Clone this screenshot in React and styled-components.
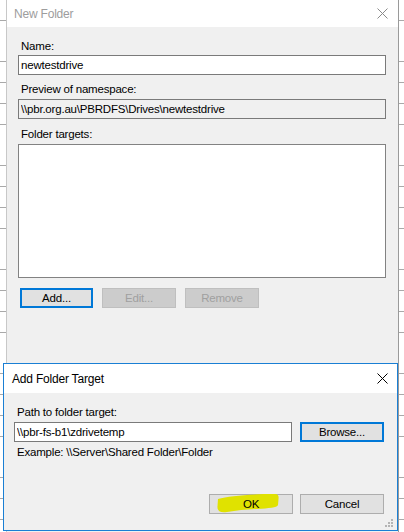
import React from "react";
import styled, { createGlobalStyle } from "styled-components";

const Global = createGlobalStyle`
  html, body { margin: 0; padding: 0; background: #fff; }
  body {
    font-family: "Liberation Sans", Arial, sans-serif;
    font-size: 11.5px;
    letter-spacing: -0.2px;
    color: #000;
  }
  * { box-sizing: border-box; }
`;

const Desktop = styled.div`
  position: relative;
  width: 404px;
  height: 532px;
  overflow: hidden;
  background-color: #fff;
  background-image: repeating-linear-gradient(
    to bottom,
    transparent 0px,
    transparent 20px,
    #a9a9a9 20px,
    #a9a9a9 20.8px
  );
  background-size: 100% 1000px;
  background-position: 0 -0.2px;
`;

const Window = styled.div`
  margin-left: 6px;
  width: 393px;
  height: 600px;
  background: #f0f0f0;
  border-left: 1px solid #c8c8c8;
  border-right: 1px solid #9a9a9a;
  display: flex;
  flex-direction: column;
`;

const TitleBar = styled.div`
  height: ${p => p.h}px;
  background: #fff;
  display: flex;
  align-items: center;
  justify-content: space-between;
  padding: 0 ${p => p.padR}px 0 ${p => p.padL}px;
  flex-shrink: 0;
`;

const Title = styled.span`
  font-size: 12px;
  color: ${p => (p.inactive ? "#9d9d9d" : "#000")};
`;

const Body = styled.div`
  display: flex;
  flex-direction: column;
  padding: ${p => p.pad};
`;

const Label = styled.div`
  height: 15px;
  line-height: 15px;
  padding-left: ${p => p.indent || 3}px;
  margin-top: ${p => p.mt || 0}px;
  margin-bottom: ${p => p.mb || 0}px;
  white-space: nowrap;
`;

const Field = styled.input`
  display: block;
  width: ${p => p.w || "100%"};
  height: 20px;
  border: 1px solid #7a7a7a;
  background: ${p => (p.readOnly ? "#f0f0f0" : "#fff")};
  font: inherit;
  letter-spacing: inherit;
  color: #000;
  padding: 0 2px;
  margin: 0;
  outline: none;
`;

const ListBox = styled.div`
  height: 134px;
  background: #fff;
  border: 1px solid #828282;
`;

const ButtonRow = styled.div`
  display: flex;
  gap: ${p => p.gap}px;
  justify-content: ${p => p.justify || "flex-start"};
  margin-top: ${p => p.mt || 0}px;
  padding-left: ${p => p.pl || 0}px;
`;

const Button = styled.div`
  position: relative;
  width: ${p => p.w}px;
  height: 20px;
  display: flex;
  align-items: center;
  justify-content: center;
  background: ${p => (p.disabled ? "#cccccc" : "#e1e1e1")};
  border: ${p =>
    p.focused ? "2px solid #0078d7" : p.disabled ? "1px solid #bfbfbf" : "1px solid #adadad"};
  color: ${p => (p.disabled ? "#a0a0a0" : "#000")};
  flex-shrink: 0;
`;

const ButtonText = styled.span`
  position: relative;
  z-index: 1;
`;

const Highlight = styled.svg`
  position: absolute;
  left: 7px;
  top: -1px;
  z-index: 0;
`;

const Dialog = styled.div`
  position: absolute;
  left: 3px;
  top: 363px;
  width: 395px;
  height: 168px;
  background: #f0f0f0;
  border: 1px solid #1a7fd4;
  display: flex;
  flex-direction: column;
`;

const FieldRow = styled.div`
  display: flex;
  gap: 8px;
  align-items: center;
`;

const Grip = styled.svg`
  position: absolute;
  right: 4px;
  bottom: 3px;
`;

const CloseIcon = ({ color }) => (
  <svg width="11" height="11" viewBox="0 0 11 11">
    <path d="M0.5 0.5 L10.5 10.5 M10.5 0.5 L0.5 10.5" stroke={color} strokeWidth="1" fill="none" />
  </svg>
);

export default function App() {
  return (
    <Desktop>
      <Global />
      <Window>
        <TitleBar h={27} padL={7} padR={10}>
          <Title inactive>New Folder</Title>
          <CloseIcon color="#8a8a8a" />
        </TitleBar>
        <Body pad="12px 12px 0 11px">
          <Label>Name:</Label>
          <Field defaultValue="newtestdrive" style={{ marginTop: 1 }} />
          <Label mt={7} mb={2}>Preview of namespace:</Label>
          <Field readOnly defaultValue="\\pbr.org.au\PBRDFS\Drives\newtestdrive" />
          <Label mt={8} mb={2}>Folder targets:</Label>
          <ListBox />
          <ButtonRow gap={9} mt={10} pl={2}>
            <Button w={73} focused>Add...</Button>
            <Button w={74} disabled>Edit...</Button>
            <Button w={74} disabled>Remove</Button>
          </ButtonRow>
        </Body>
      </Window>

      <Dialog>
        <TitleBar h={29} padL={8} padR={9}>
          <Title>Add Folder Target</Title>
          <CloseIcon color="#000" />
        </TitleBar>
        <Body pad="12px 13px 0 10px">
          <Label>Path to folder target:</Label>
          <FieldRow style={{ marginTop: 2 }}>
            <Field w="279px" defaultValue="\\pbr-fs-b1\zdrivetemp" />
            <Button w={84} focused>Browse...</Button>
          </FieldRow>
          <Label mt={3}>Example: \\Server\Shared Folder\Folder</Label>
          <ButtonRow gap={7} mt={34} justify="flex-end">
            <Button w={84}>
              <Highlight width="62" height="20" viewBox="0 0 62 20">
                <path
                  d="M1 5 C12 2 32 0 58 0 C61 0 62 2 61.5 5 L61 11 C60 14 52 14 40 15 L24 16 L10 18 C3 19 0 17 0.5 12 Z"
                  fill="#e0e200"
                />
              </Highlight>
              <ButtonText>OK</ButtonText>
            </Button>
            <Button w={84}>Cancel</Button>
          </ButtonRow>
        </Body>
        <Grip width="8" height="8" viewBox="0 0 8 8">
          <g fill="#b4b4b4">
            <rect x="6" y="0" width="2" height="2" />
            <rect x="3" y="3" width="2" height="2" />
            <rect x="6" y="3" width="2" height="2" />
            <rect x="0" y="6" width="2" height="2" />
            <rect x="3" y="6" width="2" height="2" />
            <rect x="6" y="6" width="2" height="2" />
          </g>
        </Grip>
      </Dialog>
    </Desktop>
  );
}
